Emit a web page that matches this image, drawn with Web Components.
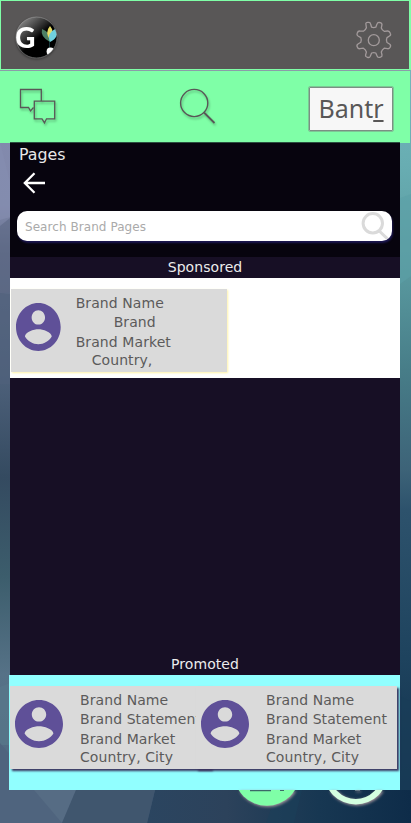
<!DOCTYPE html>
<html lang="en"><head><meta charset="utf-8"><title>Bantr Pages</title>
<style>html,body{margin:0;width:411px;height:823px;overflow:hidden;font-family:"DejaVu Sans",Verdana,sans-serif}</style></head>
<body><bantr-app></bantr-app>
<script>
const define=(name,html)=>customElements.define(name,class extends HTMLElement{
  constructor(){super();const t=document.createElement('template');t.innerHTML=html;this.attachShadow({mode:'open'}).append(t.content.cloneNode(true));}
});

define('poly-backdrop',`<style>:host{display:block;position:absolute;inset:0}svg{display:block}</style>
<svg width="411" height="823" viewBox="0 0 411 823">
<defs>
<linearGradient id="l" x2="0" y2="1"><stop offset="0" stop-color="#858bb0"/><stop offset=".25" stop-color="#8189ab"/><stop offset=".31" stop-color="#626e8a"/><stop offset=".45" stop-color="#4f627c"/><stop offset=".58" stop-color="#344a60"/><stop offset=".7" stop-color="#3c5d6c"/><stop offset=".82" stop-color="#567287"/><stop offset="1" stop-color="#4e627e"/></linearGradient>
<linearGradient id="r" x2="0" y2="1"><stop offset="0" stop-color="#79bfc0"/><stop offset=".2" stop-color="#68adb2"/><stop offset=".33" stop-color="#59999f"/><stop offset=".45" stop-color="#477d88"/><stop offset=".57" stop-color="#3d6378"/><stop offset=".62" stop-color="#2d526c"/><stop offset=".8" stop-color="#1e435e"/><stop offset="1" stop-color="#0e2b48"/></linearGradient>
<linearGradient id="b"><stop offset="0" stop-color="#2b4560"/><stop offset=".3" stop-color="#2c425b"/><stop offset=".65" stop-color="#173752"/><stop offset="1" stop-color="#0e2c49"/></linearGradient></defs>
<path fill="url(#l)" d="M0 0h206v823H0z"/><path fill="url(#r)" d="M205 0h206v823H205z"/>
<path fill="#858eb1" opacity=".6" d="M0 142l10 40v35l-10 3z"/><path fill="#5c6883" d="M0 226l10-8v74l-10 2z" opacity=".6"/><path fill="#50607b" d="M0 293l10 1v90H0z" opacity=".6"/><path fill="#59788a" d="M0 687l10-4v62H0z" opacity=".7"/>
<path fill="#5ba0a6" d="M400 198l11-4v82l-11 8z" opacity=".6"/><path fill="#1a3d58" d="M400 696l11 6v88h-11z" opacity=".7"/>
<path fill="#4f647e" d="M0 743l40 47 22 33H0z"/><path fill="#566c84" d="M34 790h42l-14 33z"/><path fill="#40566e" d="M76 790h79l-8 33H62z"/><path fill="url(#b)" d="M155 790h256v33H147z"/><path fill="#1a405a" opacity=".5" d="M302 790l-8 33h-28l12-33z"/>
</svg>`);

define('brand-mark',`<style>:host{display:block;width:46px;height:46px}svg{display:block;filter:drop-shadow(0 1px 1px #0006)}</style>
<svg width="46" height="46" viewBox="14 15 46 46"><defs><linearGradient id="g" x2=".8" y2=".9"><stop offset="0" stop-color="#aaa"/><stop offset=".52" stop-color="#202020"/><stop offset=".62" stop-color="#000"/></linearGradient><clipPath id="c"><circle cx="36.5" cy="37.5" r="20.5"/></clipPath></defs>
<circle cx="36.5" cy="37.5" r="20.7" fill="url(#g)"/><g clip-path="url(#c)"><text x="14.8" y="48.4" fill="#fff" font-family="Lato" font-weight="900" font-size="28.5">G</text>
<path fill="#4b8064" d="M50 42Q40 37 42 29Q51 32 50 42"/><path fill="#e6dc65" d="M50 40Q44.5 32 50 26Q55.5 32 50 40"/><path fill="#70d0de" d="M50 42Q46 33 57 28Q59 38 50 42"/><path stroke="#173638" d="M49.5 42v6"/><circle cx="50.5" cy="51.5" r="3.9" fill="#fff"/></g><circle cx="36.5" cy="37.5" r="20.5" fill="none" stroke="#a2a2a2" stroke-width=".7" opacity=".8"/></svg>`);

define('title-bar',`<style>:host{display:flex;box-sizing:border-box;width:411px;height:70px;justify-content:space-between;background:#595757;border:solid #7fffa7;border-width:1px 2px 1px 1px;padding:14px 16px 0 13px}svg{display:block;margin-top:5px}</style>
<brand-mark></brand-mark><svg width="38" height="40" viewBox="355 20 38 40" fill="none" stroke="#a29a9b" stroke-width="1.3" stroke-linejoin="round"><path d="M365.8 23.5Q366 22.3 367.5 22.3H369Q370.2 22.3 370.6 24L371.6 27.2Q373.8 28 375.8 27.2L377 24Q377.5 22.4 379 22.4Q381.7 22.5 382 24.5L381.3 28Q382 30 384.2 31.3L387.5 31Q389.4 30.8 390.3 33.2Q391.2 35.2 389.5 36L387 37.6Q385.9 40 387 42.5L389.5 44Q391.2 45 390.3 47Q389.5 49 387.5 48.7L384.2 48.2Q382.1 49.7 381.3 52L382 55Q382.3 56.6 380.5 57.2Q378 58 377.2 56.2L375.8 53Q373.8 52.2 371.6 53L370.3 56.2Q369.5 58 367.5 57.3Q365.2 56.7 365.6 55L366.4 52Q365.6 49.5 363.4 48.2L360 48.7Q358 49 357.3 47Q356.3 45 358 44L360.8 42.3Q361.7 40 360.8 37.6L358 36Q356.4 35 357.2 33Q358 30.8 360 31L363.4 31.2Q365.6 30 366.4 27.8Z"/><circle cx="373.8" cy="40.2" r="5.5"/></svg>`);

define('nav-bar',`<style>:host{display:flex;box-sizing:border-box;width:410px;height:73px;justify-content:space-between;background:#7fffa7;padding:15px 17px 0 18px;border-top:1px solid #8b9da9}svg{display:block;overflow:visible;fill:none;stroke:#595757;filter:drop-shadow(1.5px 2px 1px #0004)}
.b{box-sizing:border-box;width:84px;height:44px;margin-top:1px;border:1px solid #7c8f84;outline:.5px solid #7c8f8480;background:#f7f7f7;border-radius:1px;color:#595757;font:25px/41px "Noto Sans",sans-serif;text-align:center;white-space:nowrap}.b u{text-decoration-thickness:1.7px;text-underline-offset:2px}</style>
<svg width="42" height="42" viewBox="18 86 42 42" stroke-width="1.3"><path d="M33.5 107.5L30.5 111L28.5 107.5H20.5V89.5H41.3V101"/><path d="M34.3 101.2H54.7V118.8H46.5L44.5 122.8L42 118.8H34.3Z"/></svg>
<svg style="margin-left:27px" width="40" height="42" viewBox="178 86 40 42" stroke-width="1.4"><circle cx="194.2" cy="103" r="13.6"/><path d="M204 112.5L214.5 123" stroke-width="1.8"/></svg>
<div class="b">Bant<u>r</u></div>`);

define('person-icon',`<style>:host{display:block}svg{display:block;width:100%;height:100%}</style><svg viewBox="2 2 20 20" preserveAspectRatio="none" fill="#5f5098"><path d="M12 2C6.48 2 2 6.48 2 12s4.48 10 10 10 10-4.48 10-10S17.52 2 12 2zm0 3c1.66 0 3 1.34 3 3s-1.34 3-3 3-3-1.34-3-3 1.34-3 3-3zm0 14.2c-2.5 0-4.71-1.28-6-3.22.03-1.99 4-3.08 6-3.08 1.99 0 5.97 1.09 6 3.08-1.29 1.94-3.5 3.22-6 3.22z"/></svg>`);

define('brand-card',`<style>:host{display:flex;box-sizing:border-box;flex:none;height:83.3px;width:var(--w,201px);background:#dadada;box-shadow:var(--shadow,1.5px 1.5px 2px #3a3560);color:#5c5a5a;padding:5px 0 0 var(--pl,5.5px);font-size:14px;line-height:18px;letter-spacing:.08px;white-space:nowrap}
person-icon{width:var(--iw,48px);height:48px;margin-top:9.3px;flex:none}.t{display:flex;flex-direction:column;margin-left:var(--gap,17px);align-items:flex-start}.s{margin:1px 0 2px var(--s,0)}.c{margin-left:var(--c,0)}</style>
<person-icon></person-icon><div class="t"><slot name="name"></slot><div class="s"><slot name="statement"></slot></div><slot name="market"></slot><div class="c"><slot name="country"></slot></div></div>`);

define('search-field',`<style>:host{display:flex;box-sizing:border-box;width:375px;height:30px;border-radius:10px;background:#fff;box-shadow:1px 2px 2px #1c1751;padding:0 3px 0 8px;justify-content:space-between;font-size:12px;line-height:32px;letter-spacing:.06px;color:#aaa}svg{display:block;margin-top:1px}</style><slot></slot><svg width="29" height="29" viewBox="360 212 29 29" fill="none" stroke="#dadada" stroke-width="3"><circle cx="372.8" cy="223.3" r="9.7"/><path d="M379.3 231L387.5 238.8"/></svg>`);

define('section-label',`<style>:host{display:block;height:21px;font-size:14px;line-height:20px;letter-spacing:.06px;text-align:center;color:#ececec;background:#170f25}</style><slot></slot>`);

define('pages-panel',`<style>:host{display:flex;flex-direction:column;width:390px;height:533px;background:#170f25}
header{box-sizing:border-box;height:115px;background:#07040e;border-top:1px solid #2b5040;padding:3px 7px 0;color:#e8e8e8}h1{font-size:15.8px;font-weight:400;line-height:18px;margin:0 0 0 2px}.a{display:block;margin:7px 0 16px 6px}
.row{height:100px;background:#fff;box-sizing:border-box;padding:11px 0 0 .5px}.grow{flex:1}
brand-card{--w:216.5px;--shadow:1px 1px 2px #fff3a8;--iw:44.7px;--gap:15px;--s:38px;--c:16px}</style>
<header><h1>Pages</h1><svg class="a" width="24" height="24" viewBox="23 171 24 24" fill="none" stroke="#fff" stroke-width="2.3"><path d="M45 183H25M34.5 173.2L24.8 183L34.5 192.8"/></svg><search-field><span>Search Brand Pages</span></search-field></header>
<section-label>Sponsored</section-label><div class="row"><brand-card><span slot="name">Brand Name</span><span slot="statement">Brand</span><span slot="market">Brand Market</span><span slot="country">Country,</span></brand-card></div><div class="grow"></div><section-label>Promoted</section-label>`);

define('promoted-strip',`<style>:host{display:flex;box-sizing:border-box;width:391px;height:115px;background:#91ffff;padding:11px 0 0 1px}brand-card{--pl:5px;--w:200.5px;position:relative}brand-card+brand-card{margin-left:-14.5px}</style>
<brand-card><span slot="name">Brand Name</span><span slot="statement">Brand Statement</span><span slot="market">Brand Market</span><span slot="country">Country, City</span></brand-card><brand-card><span slot="name">Brand Name</span><span slot="statement">Brand Statement</span><span slot="market">Brand Market</span><span slot="country">Country, City</span></brand-card>`);

define('action-buttons',`<style>:host{display:block;height:33px;width:411px}svg{display:block;filter:drop-shadow(1.5px 1.5px 1.5px #ad9ba0)}</style><svg width="411" height="33" viewBox="0 790 411 33"><circle cx="266.8" cy="772.8" r="33" fill="#7fffa7"/><path fill="#3c6967" d="M250 790h21v1.2h-21zM280 790h4v1h-4z"/><path fill="#d4ffe0" fill-rule="evenodd" d="M323.8 772.5a32 32 0 1 0 64 0a32 32 0 1 0-64 0zM329.8 772.5a26 26.5 0 1 0 52 0a26 26.5 0 1 0-52 0z"/><path fill="#657786" d="M355 790h5v1h-5z"/></svg>`);

define('bantr-app',`<style>:host{display:block;position:relative;width:411px;height:823px;overflow:hidden}main{position:relative;display:flex;flex-direction:column}pages-panel{margin:-1px 0 0 10px}promoted-strip{margin-left:9px}</style>
<poly-backdrop></poly-backdrop><main><title-bar></title-bar><nav-bar></nav-bar><pages-panel></pages-panel><promoted-strip></promoted-strip><action-buttons></action-buttons></main>`);
</script></body></html>
